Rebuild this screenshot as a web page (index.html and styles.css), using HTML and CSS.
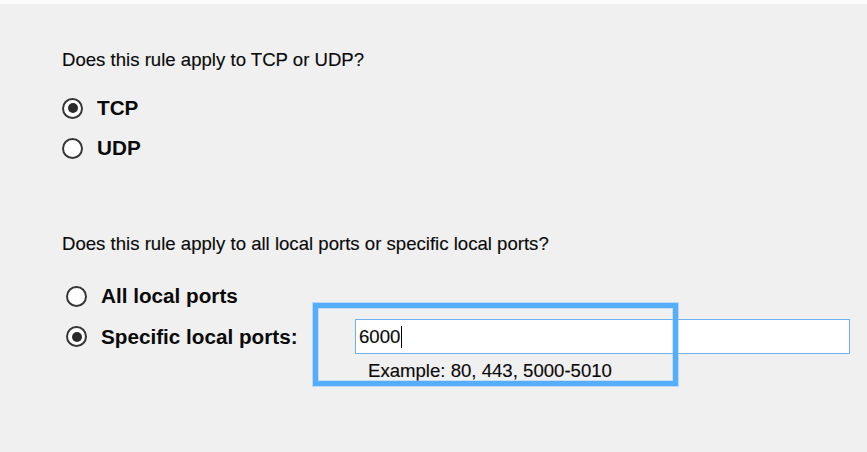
FILE: index.html
```html
<!DOCTYPE html>
<html lang="en">
<head>
<meta charset="utf-8">
<title>Protocol and Ports</title>
<link rel="stylesheet" href="styles.css">
</head>
<body>
<div class="topbar"></div>
<main class="panel">
  <p class="question q1">Does this rule apply to TCP or UDP?</p>
  <div class="group g1">
    <div class="option"><span class="radio checked"></span><span class="label">TCP</span></div>
    <div class="option"><span class="radio"></span><span class="label">UDP</span></div>
  </div>

  <p class="question q2">Does this rule apply to all local ports or specific local ports?</p>
  <div class="group g2">
    <div class="option"><span class="radio"></span><span class="label">All local ports</span></div>
    <div class="ports-row">
      <div class="option specific"><span class="radio checked"></span><span class="label">Specific local ports:</span></div>
      <div class="field">
        <div class="input"><span class="value">6000</span><span class="caret"></span></div>
        <div class="example">Example: 80, 443, 5000-5010</div>
        <div class="highlight"></div>
      </div>
    </div>
  </div>
</main>
</body>
</html>
```

FILE: styles.css
```css
html, body {
  margin: 0;
  padding: 0;
  width: 867px;
  height: 452px;
  overflow: hidden;
  background: #ffffff;
}

body {
  font-family: "Liberation Sans", Arial, sans-serif;
  color: #0a0a0a;
}

.topbar {
  height: 4px;
  background: #fbfbfb;
}

.panel {
  height: 448px;
  background: #f0f0f0;
  padding: 45px 0 0 62px;
  box-sizing: border-box;
}

.question {
  margin: 0;
  font-size: 18.6px;
  line-height: 22px;
  white-space: nowrap;
  -webkit-text-stroke: 0.15px #0a0a0a;
}

.group {
  display: flex;
  flex-direction: column;
}

.g1 {
  margin-top: 17px;
}

.g1 .option {
  height: 40px;
}

.q2 {
  margin-top: 65px;
}

.g2 {
  margin-top: 21px;
  padding-left: 4px;
}

.g2 > .option {
  height: 40px;
}

.option {
  display: flex;
  align-items: center;
  gap: 14px;
}

.radio {
  width: 21px;
  height: 21px;
  box-sizing: border-box;
  border: 2px solid #363636;
  border-radius: 50%;
  background: #fff;
  display: flex;
  align-items: center;
  justify-content: center;
  flex: none;
}

.radio.checked::after {
  content: "";
  width: 10px;
  height: 10px;
  border-radius: 50%;
  background: #2a2a2a;
}

.label {
  font-weight: bold;
  font-size: 20.7px;
  line-height: 24px;
  white-space: nowrap;
}

.ports-row {
  display: flex;
  align-items: flex-start;
  margin-top: 3px;
}

.specific {
  width: 289px;
  height: 35px;
  flex: none;
}

.field {
  position: relative;
  display: flex;
  flex-direction: column;
}

.input {
  width: 495px;
  height: 35px;
  box-sizing: border-box;
  border: 1.5px solid #6fb0ee;
  background: #fff;
  display: flex;
  align-items: center;
  padding-left: 3px;
  font-size: 18.6px;
  -webkit-text-stroke: 0.15px #0a0a0a;
}

.caret {
  width: 1px;
  height: 22px;
  background: #000;
  margin-left: 1px;
}

.example {
  margin-top: 6px;
  padding-left: 13px;
  font-size: 18.6px;
  line-height: 22px;
  white-space: nowrap;
  -webkit-text-stroke: 0.15px #0a0a0a;
}

.highlight {
  position: absolute;
  left: -42px;
  top: -16px;
  width: 365px;
  height: 83px;
  box-sizing: border-box;
  border: 5px solid #56adfa;
  box-shadow: 0 0 0 1px rgba(120, 190, 255, 0.45), inset 0 0 0 1px rgba(150, 205, 255, 0.5);
  pointer-events: none;
}
```
